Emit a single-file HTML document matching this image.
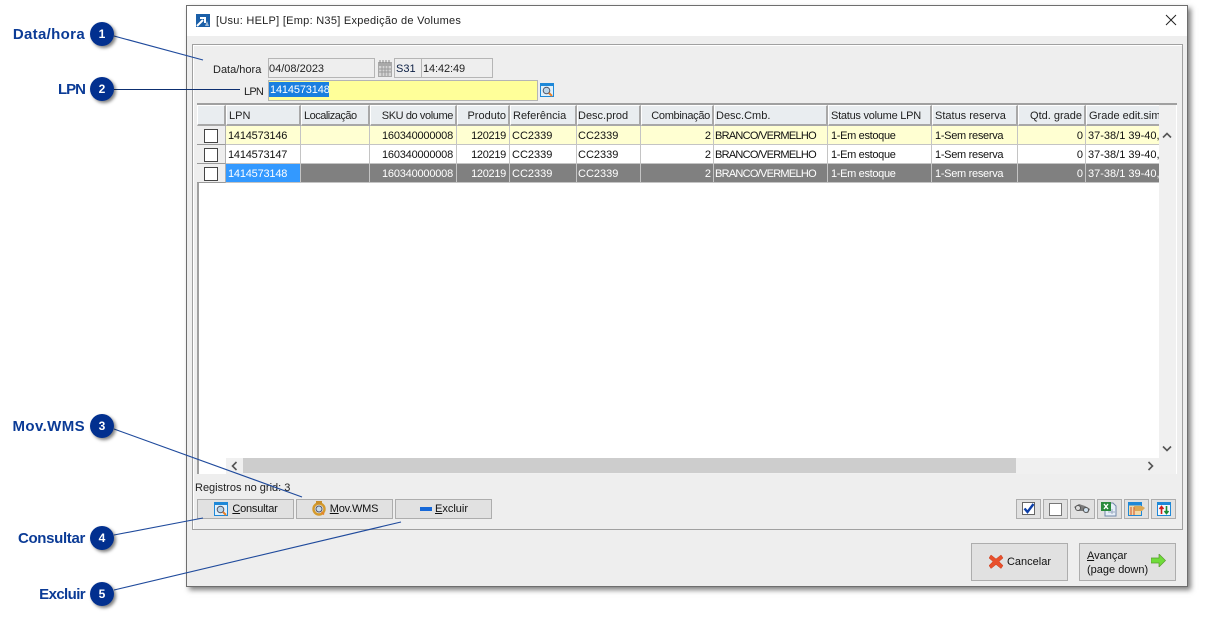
<!DOCTYPE html>
<html><head><meta charset="utf-8">
<style>
html,body{margin:0;padding:0;background:#fff;width:1210px;height:620px;overflow:hidden}
body{position:relative;font:11px "Liberation Sans",sans-serif;color:#111}
div,span,svg{position:absolute}
u{text-decoration:underline}
.t{white-space:nowrap}
#win{left:186px;top:5px;width:1000px;height:580px;background:#eee;border:1px solid #6e6e6e;box-shadow:3px 3px 5px rgba(0,0,0,.5)}
#title{left:0;top:0;width:1000px;height:30px;background:#fff}
#panel{left:192px;top:44px;width:989px;height:484px;border:1px solid #a0a0a0;box-shadow:inset 1px 1px 0 #fff}
.inp{background:#eee;border:1px solid #b5b5b5;height:18px;line-height:20px;box-sizing:content-box}
#grid{left:197px;top:103px;width:980px;height:371px;background:#fff;border-top:2px solid #a0a0a0;border-left:2px solid #a0a0a0;box-sizing:border-box;overflow:hidden}
.r{left:197px;width:962px;height:19px}
.c{top:0;height:18px;line-height:20px;border-right:1px solid #c4c4c4;border-bottom:1px solid #c4c4c4;white-space:nowrap;overflow:hidden;box-sizing:content-box}
.h{top:105px;line-height:21px;background:#e9edf0;border:1px solid #fff;border-right:2px solid #a8a8a8;border-bottom:2px solid #a8a8a8;box-sizing:border-box;white-space:nowrap;overflow:hidden;height:21px;color:#222;padding:0 2px}
.a{text-align:right}
.y .c{background:#ffffd2}
.w .c{background:#fff}
.g .c{background:#808080;color:#fff}
.n{left:197px;width:28px;height:18px;background:#eee;border-right:1px solid #b0b0b0;border-bottom:1px solid #999}
.cb{left:7px;top:3px;width:12px;height:12px;background:#fff;border:1px solid #444}
.b{background:#e1e1e1;border:1px solid #adadad;box-sizing:border-box;top:499px;height:20px;line-height:19px;text-align:center;white-space:nowrap}
.s{top:499px;width:25px;height:20px;background:#e1e1e1;border:1px solid #adadad;box-sizing:border-box}
.lab{font:bold 15px "Liberation Sans",sans-serif;color:#0b3b96;right:1125px;white-space:nowrap;line-height:18px}
.num{left:90px;width:24px;height:24px;border-radius:50%;background:#02308f;color:#fff;font:bold 12px/24px "Liberation Sans",sans-serif;text-align:center;box-shadow:2px 2px 3px rgba(0,0,0,.5)}
.d{letter-spacing:-.2px}
.p{letter-spacing:-.3px}
.m{letter-spacing:-.73px}
.e{letter-spacing:-.33px}
.v{letter-spacing:-.3px}
</style></head>
<body>
<div id="win"><div id="title"></div></div>

<svg style="left:196px;top:14px" width="14" height="13" viewBox="0 0 14 13"><rect width="14" height="13" fill="#1b5fa8"/><path d="M1 12L7 6M4 4h5v5" stroke="#fff" stroke-width="2" fill="none"/><path d="M9 12l2-5 2 5z" fill="#9db8d6"/></svg>
<div class="t" style="left:216px;top:14px;color:#222;line-height:14px;letter-spacing:.27px">[Usu: HELP] [Emp: N35] Expedição de Volumes</div>
<svg style="left:1165px;top:14px" width="12" height="12" viewBox="0 0 12 12"><path d="M1 1L11 11M11 1L1 11" stroke="#222" stroke-width="1" fill="none"/></svg>

<div id="panel"></div>

<div class="t" style="left:213px;top:63px;line-height:14px;color:#222">Data/hora</div>
<div class="inp t" style="left:268px;top:58px;width:105px;color:#222">04/08/2023</div>
<svg style="left:378px;top:60px" width="14" height="17" viewBox="0 0 14 17"><rect x="0" y="2" width="14" height="15" fill="#a9a9a9"/><rect x="1" y="6" width="12" height="10" fill="#d5d5d5"/><path d="M1 9h12M1 12h12M4 6v10M7 6v10M10 6v10" stroke="#999" stroke-width="1"/><path d="M2 0v3M5 0v3M8 0v3M11 0v3" stroke="#888"/></svg>
<div class="inp t" style="left:394px;top:58px;width:25px;padding-left:1px;color:#0b1f44">S31</div>
<div class="inp t" style="left:421px;top:58px;width:69px;padding-left:1px;color:#222;letter-spacing:-.1px">14:42:49</div>

<div class="t" style="left:244px;top:85px;line-height:14px;color:#222;letter-spacing:-.8px">LPN</div>
<div style="left:268px;top:80px;width:268px;height:19px;background:#ffff99;border:1px solid #b5b5b5"></div>
<div class="t" style="left:269px;top:82px;width:60px;height:15px;background:#1a7fe0;color:#fff;line-height:17px;letter-spacing:-.15px;text-indent:1px;overflow:hidden">1414573148</div>
<svg style="left:540px;top:83px" width="14" height="14" viewBox="0 0 14 14"><rect x=".5" y=".5" width="13" height="13" fill="#dff0fb" stroke="#1e88d8"/><rect x="1" y="1" width="12" height="2" fill="#1e88d8"/><circle cx="6.5" cy="7.5" r="3.3" fill="#bcd7ea" stroke="#556"/><path d="M9 10l3 3" stroke="#e8802a" stroke-width="2"/></svg>

<div id="grid"></div>
<div class="h" style="left:197px;width:29px"></div>
<div class="h" style="left:226px;width:75px">LPN</div>
<div class="h" style="left:301px;width:69px;letter-spacing:-.5px">Localização</div>
<div class="h a" style="left:370px;width:87px;letter-spacing:-.4px">SKU do volume</div>
<div class="h a" style="left:457px;width:53px">Produto</div>
<div class="h" style="left:510px;width:67px">Referência</div>
<div class="h" style="left:577px;width:64px;padding-left:0">Desc.prod</div>
<div class="h a" style="left:641px;width:73px;letter-spacing:-.3px">Combinação</div>
<div class="h" style="left:714px;width:114px;padding-left:1px">Desc.Cmb.</div>
<div class="h" style="left:828px;width:104px;letter-spacing:-.25px">Status volume LPN</div>
<div class="h" style="left:932px;width:86px">Status reserva</div>
<div class="h a" style="left:1018px;width:68px">Qtd. grade</div>
<div class="h" style="left:1086px;width:73px;border-right:0">Grade edit.sim</div>

<div class="n" style="top:126px"><div class="cb"></div></div>
<div class="n" style="top:145px"><div class="cb"></div></div>
<div class="n" style="top:164px"><div class="cb"></div></div>

<div class="r y" style="top:126px">
<div class="c d" style="left:29px;width:74px;text-indent:2px">1414573146</div><div class="c" style="left:104px;width:68px"></div><div class="c a" style="left:173px;width:86px"><span class="d" style="right:3px">160340000008</span></div><div class="c" style="left:260px;width:52px"><span class="p" style="right:3px">120219</span></div><div class="c" style="left:313px;width:66px"><span style="left:2px">CC2339</span></div><div class="c" style="left:380px;width:63px"><span style="left:1px">CC2339</span></div><div class="c" style="left:444px;width:72px"><span style="right:2px">2</span></div><div class="c" style="left:517px;width:113px"><span class="m" style="left:1px">BRANCO/VERMELHO</span></div><div class="c" style="left:631px;width:103px"><span class="e" style="left:3px">1-Em estoque</span></div><div class="c" style="left:735px;width:85px"><span class="v" style="left:3px">1-Sem reserva</span></div><div class="c" style="left:821px;width:67px"><span style="right:2px">0</span></div><div class="c" style="left:889px;width:73px;border-right:0"><span style="left:2px">37-38/1 39-40,</span></div>
</div>
<div class="r w" style="top:145px">
<div class="c d" style="left:29px;width:74px;text-indent:2px">1414573147</div><div class="c" style="left:104px;width:68px"></div><div class="c a" style="left:173px;width:86px"><span class="d" style="right:3px">160340000008</span></div><div class="c" style="left:260px;width:52px"><span class="p" style="right:3px">120219</span></div><div class="c" style="left:313px;width:66px"><span style="left:2px">CC2339</span></div><div class="c" style="left:380px;width:63px"><span style="left:1px">CC2339</span></div><div class="c" style="left:444px;width:72px"><span style="right:2px">2</span></div><div class="c" style="left:517px;width:113px"><span class="m" style="left:1px">BRANCO/VERMELHO</span></div><div class="c" style="left:631px;width:103px"><span class="e" style="left:3px">1-Em estoque</span></div><div class="c" style="left:735px;width:85px"><span class="v" style="left:3px">1-Sem reserva</span></div><div class="c" style="left:821px;width:67px"><span style="right:2px">0</span></div><div class="c" style="left:889px;width:73px;border-right:0"><span style="left:2px">37-38/1 39-40,</span></div>
</div>
<div class="r g" style="top:164px">
<div class="c d" style="left:29px;width:74px;text-indent:2px;background:#3399ff">1414573148</div><div class="c" style="left:104px;width:68px"></div><div class="c a" style="left:173px;width:86px"><span class="d" style="right:3px">160340000008</span></div><div class="c" style="left:260px;width:52px"><span class="p" style="right:3px">120219</span></div><div class="c" style="left:313px;width:66px"><span style="left:2px">CC2339</span></div><div class="c" style="left:380px;width:63px"><span style="left:1px">CC2339</span></div><div class="c" style="left:444px;width:72px"><span style="right:2px">2</span></div><div class="c" style="left:517px;width:113px"><span class="m" style="left:1px">BRANCO/VERMELHO</span></div><div class="c" style="left:631px;width:103px"><span class="e" style="left:3px">1-Em estoque</span></div><div class="c" style="left:735px;width:85px"><span class="v" style="left:3px">1-Sem reserva</span></div><div class="c" style="left:821px;width:67px"><span style="right:2px">0</span></div><div class="c" style="left:889px;width:73px;border-right:0"><span style="left:2px">37-38/1 39-40,</span></div>
</div>

<div style="left:1159px;top:105px;width:17px;height:368px;background:#f0f0f0"></div>
<svg style="left:1162px;top:132px" width="10" height="7"><path d="M1 5.500L5 1.500L9 5.500" stroke="#555" stroke-width="1.6" fill="none"/></svg>
<svg style="left:1162px;top:445px" width="10" height="7"><path d="M1 1.500L5 5.500L9 1.500" stroke="#555" stroke-width="1.6" fill="none"/></svg>
<div style="left:226px;top:458px;width:950px;height:16px;background:#f0f0f0"></div>
<div style="left:243px;top:458px;width:773px;height:15px;background:#cdcdcd"></div>
<svg style="left:231px;top:461px" width="7" height="10"><path d="M5.500 1L1.500 5L5.500 9" stroke="#555" stroke-width="1.6" fill="none"/></svg>
<svg style="left:1147px;top:461px" width="7" height="10"><path d="M1.500 1L5.500 5L1.500 9" stroke="#555" stroke-width="1.6" fill="none"/></svg>

<div class="t" style="left:195px;top:481px;line-height:14px;color:#222">Registros no grid: 3</div>

<div class="b" style="left:197px;width:97px;padding-left:19px;letter-spacing:-.2px"><u>C</u>onsultar</div>
<svg style="left:214px;top:502px" width="14" height="14" viewBox="0 0 14 14"><rect x=".5" y=".5" width="13" height="13" fill="#dff0fb" stroke="#1e88d8"/><rect x="1" y="1" width="12" height="2" fill="#1e88d8"/><circle cx="6.500" cy="7.500" r="3.300" fill="#bcd7ea" stroke="#556"/><path d="M9 10l3 3" stroke="#e8802a" stroke-width="2"/></svg>
<div class="b" style="left:296px;width:97px;padding-left:19px;letter-spacing:-.2px"><u>M</u>ov.WMS</div>
<svg style="left:312px;top:501px" width="14" height="15" viewBox="0 0 14 15"><circle cx="7" cy="8" r="5.500" fill="none" stroke="#d49a2c" stroke-width="2.400"/><rect x="4" y="0" width="6" height="3" fill="#c98f2a"/><circle cx="7" cy="8" r="3" fill="#c5dcec" stroke="#556"/><path d="M9.500 11l2.500 2.500" stroke="#e8802a" stroke-width="1.600"/></svg>
<div class="b" style="left:395px;width:97px;padding-left:16px"><u>E</u>xcluir</div>
<div style="left:420px;top:507px;width:12px;height:4px;background:#1668d8"></div>

<div class="s" style="left:1016px"></div>
<svg style="left:1022px;top:502px" width="13" height="13" viewBox="0 0 13 13"><rect x=".5" y=".5" width="12" height="12" fill="#fff" stroke="#666"/><path d="M2.500 6.500L5.500 10L11.500 2" stroke="#0d3fa8" stroke-width="2.400" fill="none"/></svg>
<div class="s" style="left:1043px"></div>
<div style="left:1049px;top:503px;width:11px;height:11px;background:#fff;border:1px solid #777"></div>
<div class="s" style="left:1070px"></div>
<svg style="left:1074px;top:503px" width="17" height="11" viewBox="0 0 17 11"><path d="M0 4l5-3 6 2 5 3-2 4-5-2-5 0z" fill="#7a7a7a"/><circle cx="4" cy="5" r="2.500" fill="#ddd" stroke="#555"/><circle cx="12" cy="7" r="2.500" fill="#cfe0ee" stroke="#555"/></svg>
<div class="s" style="left:1097px"></div>
<svg style="left:1101px;top:501px" width="16" height="16" viewBox="0 0 16 16"><path d="M4 2h8l3 3v10H4z" fill="#e6eef7" stroke="#7088a8"/><rect x="0" y="1" width="10" height="9" fill="#2a8a3c"/><path d="M3 3l4 5M7 3l-4 5" stroke="#fff" stroke-width="1.400"/><path d="M11 8v5M7 11h7" stroke="#99aac0"/></svg>
<div class="s" style="left:1124px"></div>
<svg style="left:1128px;top:502px" width="17" height="14" viewBox="0 0 17 14"><rect x=".5" y=".5" width="13" height="13" fill="#f2d9a8" stroke="#1e88d8"/><rect x="1" y="1" width="12" height="2.500" fill="#1e88d8"/><path d="M3 5v8M6 5v8" stroke="#d0502a"/><path d="M6 4h8l3 2-3 3H7z" fill="#dba856"/></svg>
<div class="s" style="left:1151px"></div>
<svg style="left:1157px;top:502px" width="14" height="14" viewBox="0 0 14 14"><rect x=".5" y=".5" width="13" height="13" fill="#f4f8fc" stroke="#1e88d8"/><rect x="1" y="1" width="12" height="2" fill="#1e88d8"/><path d="M4.500 12V5M2.500 7l2-2.500 2 2.500" stroke="#d01c1c" stroke-width="1.600" fill="none"/><path d="M9.500 4v7M7.500 9l2 2.500 2-2.500" stroke="#1c8a30" stroke-width="1.600" fill="none"/></svg>

<div class="b" style="left:971px;top:543px;width:97px;height:38px;line-height:37px;padding-left:19px">Cancelar</div>
<svg style="left:989px;top:554px" width="15" height="15" viewBox="0 0 15 15"><path d="M2 1l5 4 5-4 2 3-4 3.500 4 4-2 3-5-4-5 4-2-3 4-4L0 4z" fill="#e8502c" stroke="#c83c1c" stroke-width=".5"/></svg>
<div class="b" style="left:1079px;top:543px;width:97px;height:38px;text-align:left"></div>
<div class="t" style="left:1087px;top:549px;line-height:14px"><u>A</u>vançar<br>(page down)</div>
<svg style="left:1151px;top:554px" width="15" height="13" viewBox="0 0 15 13"><path d="M0 4h8V0l6.500 6.500L8 13V9H0z" fill="#6fdc3a" stroke="#5a9a30" stroke-width=".7"/></svg>

<svg style="left:0;top:0;pointer-events:none" width="1210" height="620"><g stroke="#1f4a9c" stroke-width="1.100" fill="none"><path d="M114 36L203 60"/><path d="M114 89.500H240" stroke="#0d2f70"/><path d="M114 429L302 497"/><path d="M114 535L203 518"/><path d="M114 590L401 522"/></g></svg>

<div class="lab" style="top:26px;letter-spacing:.33px">Data/hora</div><div class="num" style="top:22px">1</div>
<div class="lab" style="top:81px;letter-spacing:-1px">LPN</div><div class="num" style="top:77px">2</div>
<div class="lab" style="top:418px;letter-spacing:.4px">Mov.WMS</div><div class="num" style="top:414px">3</div>
<div class="lab" style="top:530px;letter-spacing:-.33px">Consultar</div><div class="num" style="top:526px">4</div>
<div class="lab" style="top:586px;letter-spacing:-.6px">Excluir</div><div class="num" style="top:582px">5</div>
</body></html>
